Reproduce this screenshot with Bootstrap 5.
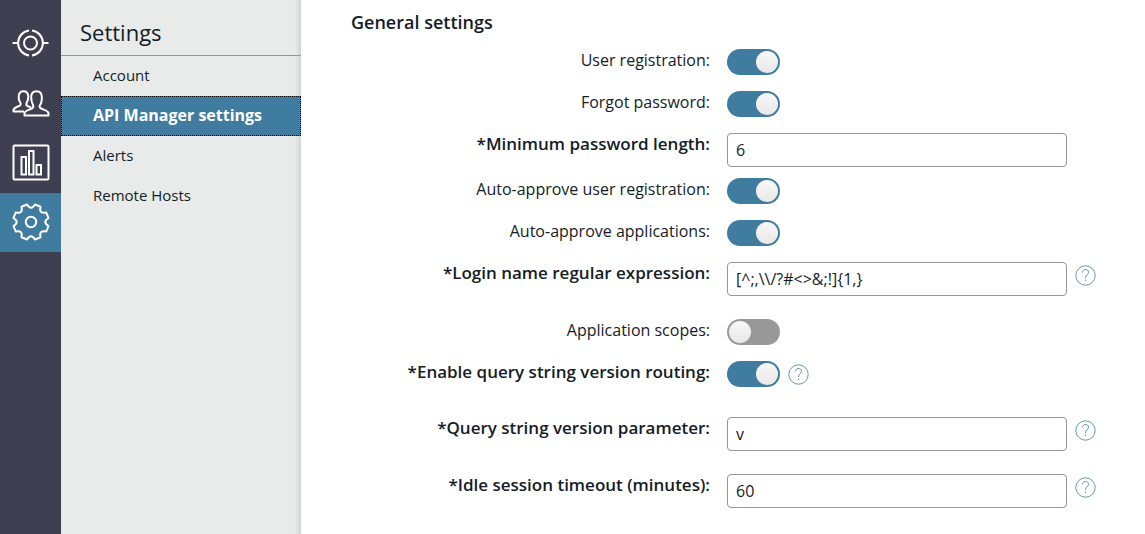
<!DOCTYPE html>
<html lang="en">
<head>
<meta charset="utf-8">
<meta name="viewport" content="width=device-width, initial-scale=1">
<title>API Manager settings</title>
<link href="https://cdn.jsdelivr.net/npm/bootstrap@5.3.0/dist/css/bootstrap.min.css" rel="stylesheet">
<style>
  :root { --brand: #407ca0; --ink: #141c26; --rail: #3e4052; --line: #969696; }
  body { font-family: "Open Sans", sans-serif; font-size: 16px; line-height: 22px; color: var(--ink); }
  .rail { width: 61px; background: var(--rail); padding-top: 13px; }
  .rail-link { height: 60px; color: #fff; padding-bottom: 1px; }
  .rail-link svg { width: 38px; height: 38px; fill: none; stroke: currentColor; stroke-width: 2; }
  .rail-link.active { background: var(--brand); height: 59px; }
  .side { width: 240px; background: linear-gradient(to left, #d2d4d3, #e8ebea 6px); }
  .side-title { font-size: 22px; line-height: 30px; font-weight: 400; padding: 17px 19px 8px; border-bottom: 1px solid var(--line); }
  .side-link { font-size: 15px; height: 40px; padding: 0 32px 2px; color: var(--ink); text-decoration: none; }
  .side-link.active { background: var(--brand); color: #fff; font-weight: 700; font-size: 16px; outline: 1px dotted #000; outline-offset: -1px; }
  .settings { padding: 11px 48px 11px 50px; }
  .settings-title { font-size: 18px; line-height: 22px; font-weight: 600; margin-bottom: 16px; }
  .setting { gap: 17px; margin-bottom: 16px; }
  .setting-text { margin-bottom: 11px; }
  .setting-roomy { margin-bottom: 30px; }
  .setting-text.setting-roomy { margin-bottom: 23px; }
  .setting-label { width: 359px; text-align: right; }
  .setting-label.required { font-weight: 600; font-size: 17px; }
  .setting .form-control { max-width: 340px; height: 34px; padding: 0 8px; border-color: var(--line); border-radius: 4px; color: var(--ink); }
  .setting .form-check-input { width: 53px; height: 26px; margin: 0; border: 0; border-radius: 13px; background: #999; position: relative; flex: none; }
  .setting .form-check-input::after { content: ""; position: absolute; top: 2px; left: 2px; width: 22px; height: 22px; border-radius: 50%; background: linear-gradient(#f8f8f8, #e8e8e8); }
  .setting .form-check-input:checked { background: var(--brand); }
  .setting .form-check-input:checked::after { left: auto; right: 2px; }
  .help { color: var(--brand); margin: 3px 0 0 8px; line-height: 0; }
  .help svg { width: 21px; height: 21px; fill: none; stroke: currentColor; stroke-width: .8; }
</style>
</head>
<body>
<div class="d-flex min-vh-100">
  <nav class="rail flex-shrink-0" aria-label="Main">
    <a href="#" class="rail-link d-flex align-items-center justify-content-center" aria-label="API">
      <svg viewBox="0 0 38 38"><circle cx="18.500" cy="19" r="6.500"/><path d="M17 6.600A12.500 12.500 0 0 0 17 31.400M20 6.600A12.500 12.500 0 0 1 20 31.400M.5 19h6M30.500 19h6"/></svg>
    </a>
    <a href="#" class="rail-link d-flex align-items-center justify-content-center" aria-label="Clients">
      <svg viewBox="0 0 38 38" stroke-linejoin="round"><path d="M12.500 31.500H36.500V29C36 26.500 32 26 29 24.500C27.300 23.500 27.300 22 28 21C30 18.500 30 16.500 29.800 12.500C29.500 9 27.500 7.300 24.500 7.300S19.500 9 19.200 12.500C19 16.500 19.500 18.500 21 21C21.700 22.500 21.500 23.500 20 24.500C17 26 13 26.500 12.500 29Z"/><path d="M12 27.500H1.500V26C2 23.500 5 23 7.500 21.800C9 21 9 19.500 8 18C6.500 16 6.500 14.500 6.700 12C7 9 9 7.300 11.500 7.300C14 7.300 16 9 16.300 12C16.500 15 16 16.500 14.800 18.500C14 20 14 21.200 15.500 22L19 23.500"/></svg>
    </a>
    <a href="#" class="rail-link d-flex align-items-center justify-content-center" aria-label="Monitoring">
      <svg viewBox="0 0 38 38"><rect x="1.500" y="1.500" width="35" height="34" rx="1"/><path d="M9.500 13h4.500v17.500h-4.500zM17 7h4.500v23.500H17zM24.500 21H29v9.500h-4.500z"/></svg>
    </a>
    <a href="#" class="rail-link active d-flex align-items-center justify-content-center" aria-label="Settings" aria-current="page">
      <svg viewBox="-19 -19 38 38" stroke-linejoin="round"><circle cx="0" cy="0" r="5.200"/><path d="M-4 -17.500Q0 -11.100 4 -17.500L9.500 -15.300Q7.800 -7.800 15.300 -9.500L17.500 -4Q11.100 0 17.500 4L15.300 9.500Q7.800 7.800 9.500 15.300L4 17.500Q0 11.100 -4 17.500L-9.500 15.300Q-7.800 7.800 -15.300 9.500L-17.500 4Q-11.100 0 -17.500 -4L-15.300 -9.500Q-7.800 -7.800 -9.500 -15.300Z"/></svg>
    </a>
  </nav>

  <aside class="side flex-shrink-0">
    <h1 class="side-title m-0">Settings</h1>
    <nav class="d-flex flex-column" aria-label="Settings">
      <a href="#" class="side-link d-flex align-items-center">Account</a>
      <a href="#" class="side-link active d-flex align-items-center" aria-current="page">API Manager settings</a>
      <a href="#" class="side-link d-flex align-items-center">Alerts</a>
      <a href="#" class="side-link d-flex align-items-center">Remote Hosts</a>
    </nav>
  </aside>

  <main class="settings flex-grow-1">
    <h2 class="settings-title">General settings</h2>
    <form>
      <div class="setting d-flex align-items-start">
        <label class="setting-label flex-shrink-0" for="userReg">User registration:</label>
        <input class="form-check-input" type="checkbox" role="switch" id="userReg" checked>
      </div>
      <div class="setting d-flex align-items-start">
        <label class="setting-label flex-shrink-0" for="forgot">Forgot password:</label>
        <input class="form-check-input" type="checkbox" role="switch" id="forgot" checked>
      </div>
      <div class="setting setting-text d-flex align-items-start">
        <label class="setting-label required flex-shrink-0" for="minLen">*Minimum password length:</label>
        <input class="form-control" type="text" id="minLen" value="6">
      </div>
      <div class="setting d-flex align-items-start">
        <label class="setting-label flex-shrink-0" for="autoUser">Auto-approve user registration:</label>
        <input class="form-check-input" type="checkbox" role="switch" id="autoUser" checked>
      </div>
      <div class="setting d-flex align-items-start">
        <label class="setting-label flex-shrink-0" for="autoApp">Auto-approve applications:</label>
        <input class="form-check-input" type="checkbox" role="switch" id="autoApp" checked>
      </div>
      <div class="setting setting-text setting-roomy d-flex align-items-start">
        <label class="setting-label required flex-shrink-0" for="loginRe">*Login name regular expression:</label>
        <div class="d-flex flex-grow-1 align-items-start">
          <input class="form-control" type="text" id="loginRe" value="[^;,\\/?#&lt;&gt;&amp;;!]{1,}">
          <a href="#" class="help" aria-label="Help"><svg viewBox="0 0 21 21"><circle cx="10.500" cy="10.500" r="9.700"/><path d="M7.500 7.500C7.500 3.500 13.500 3.500 13.500 7.200C13.500 10 10.500 9.500 10.500 13M10.500 14.500v1.500"/></svg></a>
        </div>
      </div>
      <div class="setting d-flex align-items-start">
        <label class="setting-label flex-shrink-0" for="scopes">Application scopes:</label>
        <input class="form-check-input" type="checkbox" role="switch" id="scopes">
      </div>
      <div class="setting setting-roomy d-flex align-items-start">
        <label class="setting-label required flex-shrink-0" for="routing">*Enable query string version routing:</label>
        <div class="d-flex flex-grow-1 align-items-start">
          <input class="form-check-input" type="checkbox" role="switch" id="routing" checked>
          <a href="#" class="help" aria-label="Help"><svg viewBox="0 0 21 21"><circle cx="10.500" cy="10.500" r="9.700"/><path d="M7.500 7.500C7.500 3.500 13.500 3.500 13.500 7.200C13.500 10 10.500 9.500 10.500 13M10.500 14.500v1.500"/></svg></a>
        </div>
      </div>
      <div class="setting setting-text setting-roomy d-flex align-items-start">
        <label class="setting-label required flex-shrink-0" for="param">*Query string version parameter:</label>
        <div class="d-flex flex-grow-1 align-items-start">
          <input class="form-control" type="text" id="param" value="v">
          <a href="#" class="help" aria-label="Help"><svg viewBox="0 0 21 21"><circle cx="10.500" cy="10.500" r="9.700"/><path d="M7.500 7.500C7.500 3.500 13.500 3.500 13.500 7.200C13.500 10 10.500 9.500 10.500 13M10.500 14.500v1.500"/></svg></a>
        </div>
      </div>
      <div class="setting setting-text m-0 d-flex align-items-start">
        <label class="setting-label required flex-shrink-0" for="idle">*Idle session timeout (minutes):</label>
        <div class="d-flex flex-grow-1 align-items-start">
          <input class="form-control" type="text" id="idle" value="60">
          <a href="#" class="help" aria-label="Help"><svg viewBox="0 0 21 21"><circle cx="10.500" cy="10.500" r="9.700"/><path d="M7.500 7.500C7.500 3.500 13.500 3.500 13.500 7.200C13.500 10 10.500 9.500 10.500 13M10.500 14.500v1.500"/></svg></a>
        </div>
      </div>
    </form>
  </main>
</div>
<script src="https://cdn.jsdelivr.net/npm/bootstrap@5.3.0/dist/js/bootstrap.bundle.min.js"></script>
</body>
</html>
